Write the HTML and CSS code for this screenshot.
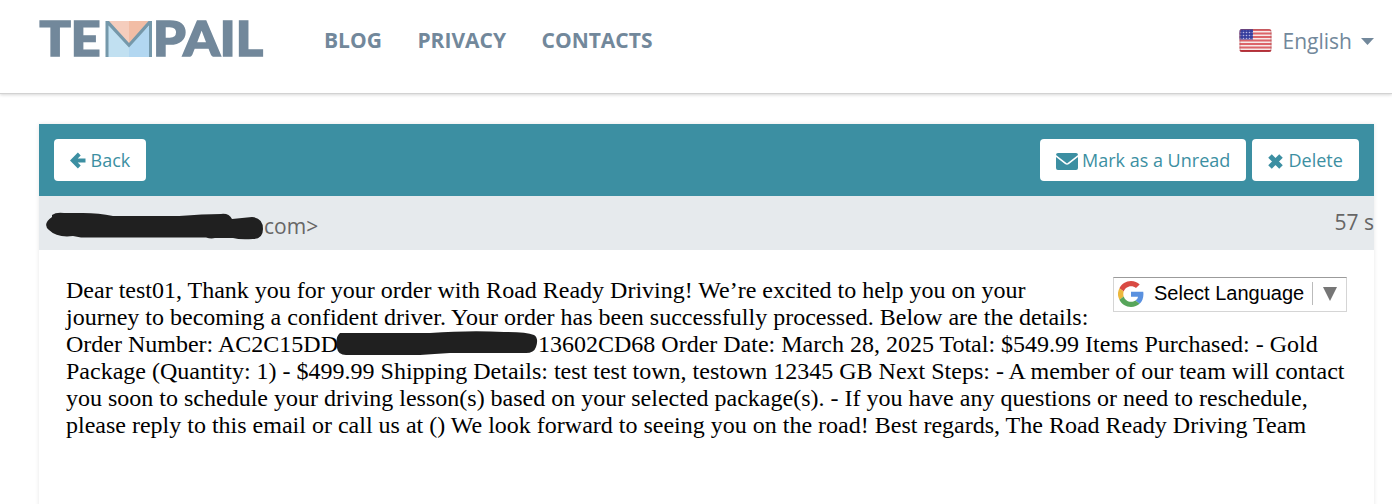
FILE: index.html
```html
<!DOCTYPE html>
<html lang="en">
<head>
<meta charset="utf-8">
<title>Tempail</title>
<link rel="stylesheet" href="styles.css">
</head>
<body>
<header class="header">
  <a class="logo">
    <svg width="232" height="72" viewBox="0 -14 232 72">
      <g class="logo-text">
        <text x="3.500" y="40" textLength="61" lengthAdjust="spacingAndGlyphs">TE</text>
        <text x="117" y="40" textLength="110" lengthAdjust="spacingAndGlyphs">PAIL</text>
      </g>
      <path fill="#c1e0f1" d="M71 8L93 29V41H71z"/>
      <path fill="#b2d7f1" d="M115 8L93 29V41H115z"/>
      <path fill="#f5cdbd" d="M72 5H93V29z"/>
      <path fill="#f2bda5" d="M93 5H113L93 29z"/>
      <path fill="#7598aa" d="M69.500 5H73L93 27L112.500 5H116V41H113V9.500L93 31.500L72.500 9.500V41H69.500z"/>
    </svg>
  </a>
  <nav class="nav">
    <a>BLOG</a><a>PRIVACY</a><a>CONTACTS</a>
  </nav>
  <div class="language">
    <svg width="34" height="26" viewBox="0 0 34 26">
      <defs>
        <clipPath id="flag"><rect x="0.500" y="1" width="32" height="23" rx="2.500"/></clipPath>
        <pattern id="stars" width="3" height="3" patternUnits="userSpaceOnUse"><circle cx="1.500" cy="1.500" r=".8" fill="#b5b5e0"/></pattern>
      </defs>
      <g clip-path="url(#flag)">
        <path fill="#f7e9e9" d="M0 1h33v23H0z"/>
        <path stroke="#dc6469" stroke-width="1.800" d="M0 2h33M0 5.500h33M0 9h33M0 12.500h33M0 16h33M0 19.500h33"/>
        <path stroke="#b92e36" stroke-width="2" d="M0 23h33"/>
        <path fill="#373f9e" d="M0 1h14v10.500H0z"/>
        <path fill="url(#stars)" d="M1.500 2h12v9h-12z"/>
      </g>
      <rect x="1" y="1.500" width="31" height="22" rx="2.500" fill="none" stroke="#a94b55" stroke-opacity=".45"/>
    </svg>
    <span>English</span>
    <svg class="caret" width="13" height="7" viewBox="0 0 13 7"><path fill="#72889b" d="M0 0h13L6.500 7z"/></svg>
  </div>
</header>
<main class="mail">
  <div class="toolbar">
    <a class="button back">
      <svg width="16" height="18" viewBox="0 0 16 18"><path fill="none" stroke="#3c8fa2" stroke-width="4" d="M15.500 9.500H3M9.300 3L2.800 9.500l6.500 6.500"/></svg>
      <span>Back</span>
    </a>
    <div class="actions">
      <a class="button unread">
        <svg width="22" height="18" viewBox="0 0 22 18"><path fill="#3c8fa2" d="M2 0h18q2 0 2 2l-11 8.500L0 2q0-2 2-2zM0 4l9 7q2 1.500 4 0l9-7v11q0 2-2 2H2q-2 0-2-2z"/></svg>
        <span>Mark as a Unread</span>
      </a>
      <a class="button delete">
        <svg width="15" height="15" viewBox="0 0 15 15"><path stroke="#3c8fa2" stroke-width="5" stroke-linejoin="round" d="M2 2l11 11M13 2L2 13"/></svg>
        <span>Delete</span>
      </a>
    </div>
  </div>
  <div class="sender">
    <div class="from">
      <svg width="219" height="28" viewBox="0 0 219 28"><path fill="#202020" d="M7 3Q11 0 19 1L38 1Q54 1 68 4H134Q158 2 176 2Q184 1 187 7L207 5Q218 6 218 17Q218 27 208 27Q195 28 188 26L170 26Q166 27 161 25.500H36L28 24Q12 26 4 18Q-3 12 7 5z"/></svg>
      <span>com&gt;</span>
    </div>
    <span class="age">57 s</span>
  </div>
  <div class="content">
    <div class="translate">
      <svg width="26" height="26" viewBox="0 0 48 48">
        <path fill="#d94a43" d="M24 9.500c3.540 0 6.700 1.220 9.200 3.600l6.850-6.850C35.900 2.380 30.470 0 24 0 14.620 0 6.510 5.380 2.560 13.220l7.980 6.190C12.430 13.720 17.740 9.500 24 9.500z"/>
        <path fill="#5a91df" d="M46.980 24.550c0-1.570-.15-3.090-.38-4.550H24v9.020h12.940c-.58 2.960-2.260 5.480-4.780 7.180l7.730 6c4.510-4.180 7.090-10.360 7.090-17.650z"/>
        <path fill="#ecb83d" d="M10.530 28.590A14.500 14.500 0 0 1 10.530 19.410L2.560 13.220a24 24 0 0 0 0 21.560z"/>
        <path fill="#57a55a" d="M24 48c6.480 0 11.930-2.130 15.890-5.810l-7.730-6c-2.150 1.450-4.920 2.300-8.160 2.300-6.260 0-11.570-4.220-13.470-9.910l-7.970 6.190C6.510 42.620 14.620 48 24 48z"/>
      </svg>
      <span class="choice">Select Language</span>
      <svg class="arrow" width="14" height="14" viewBox="0 0 14 14"><path fill="#767676" d="M0 0h14L7 14z"/></svg>
    </div>
    <p class="message">Dear test01, Thank you for your order with Road Ready Driving! We’re excited to help you on your<br>journey to becoming a confident driver. Your order has been successfully processed. Below are the details:<br>Order Number: AC2C15DD<svg class="redaction" width="203" height="25" viewBox="0 0 203 25"><path fill="#202020" d="M4 2H94Q135-1 168 1Q190 1 198 4Q203 7 200 16Q198 22 190 22L114 22Q98 23 84 24H10Q2 24 1 17Q-1 6 4 2z"/></svg>13602CD68 Order Date: March 28, 2025 Total: $549.99 Items Purchased: - Gold<br>Package (Quantity: 1) - $499.99 Shipping Details: test test town, testown 12345 GB Next Steps: - A member of our team will contact<br>you soon to schedule your driving lesson(s) based on your selected package(s). - If you have any questions or need to reschedule,<br>please reply to this email or call us at () We look forward to seeing you on the road! Best regards, The Road Ready Driving Team</p>
  </div>
</main>
</body>
</html>
```
FILE: styles.css
```css
* { box-sizing: border-box; }
body {
  margin: 0;
  height: 504px;
  overflow: hidden;
  background: #fff;
  font-family: "Open Sans", sans-serif;
}
svg { display: block; flex: none; }
.header {
  display: flex;
  align-items: flex-start;
  height: 94px;
  padding: 2px 18px 0 36px;
  border-bottom: 1px solid #d2d2d2;
  box-shadow: 0 1px 3px rgba(0, 0, 0, .16);
}
.logo-text {
  fill: #72889b;
  stroke: #72889b;
  stroke-width: 1.6px;
  font: 900 48px Lato, sans-serif;
}
.nav {
  display: flex;
  gap: 35.5px;
  margin: 23px 0 0 56px;
  color: #72889b;
  font-size: 21px;
  font-weight: 700;
  line-height: 30px;
}
.language {
  display: flex;
  align-items: center;
  height: 30px;
  margin: 24px 0 0 auto;
  color: #72889b;
  font-size: 21px;
  line-height: 30px;
}
.language span { margin-left: 10px; }
.caret { margin-left: 9px; }
.mail {
  width: 1335px;
  height: 400px;
  margin: 30px 0 0 39px;
  box-shadow: 0 0 4px rgba(0, 0, 0, .1);
}
.toolbar {
  display: flex;
  justify-content: space-between;
  height: 72px;
  padding: 15px;
  background: #3c8fa2;
}
.actions { display: flex; gap: 6px; }
.button {
  display: flex;
  align-items: center;
  height: 42px;
  padding: 0 16px;
  border-radius: 4px;
  background: #fff;
  color: #3c8fa2;
  font-size: 18px;
  line-height: 42px;
  white-space: nowrap;
}
.back { width: 92px; gap: 4.5px; }
.unread { width: 206px; gap: 4px; }
.delete { width: 107px; gap: 5.5px; }
.unread svg, .delete svg { margin-top: 3px; }
.sender {
  display: flex;
  justify-content: space-between;
  height: 54px;
  padding-left: 6px;
  background: #e6eaed;
  color: #666;
  font-size: 21px;
  line-height: 30px;
}
.from { display: flex; padding-top: 15px; }
.from svg { margin-top: 1px; }
.age { padding-top: 11px; }
.content { padding: 27px; }
.translate {
  float: right;
  display: flex;
  align-items: center;
  width: 234px;
  height: 35px;
  padding: 0 9px 2px 4px;
  border: 1px solid #d5d5d5;
  border-top-color: #9b9b9b;
  color: #000;
  font: 20px "Liberation Sans", Arial, sans-serif;
}
.choice {
  margin-left: 10px;
  padding-right: 8px;
  border-right: 1px solid #bbb;
  white-space: nowrap;
}
.arrow { margin-left: auto; }
.message {
  margin: 0;
  color: #000;
  font: 24px/27px "Liberation Serif", "Times New Roman", serif;
  white-space: nowrap;
}
.redaction {
  display: inline-block;
  margin: -2px -1.5px 0;
  vertical-align: -4px;
}
```
